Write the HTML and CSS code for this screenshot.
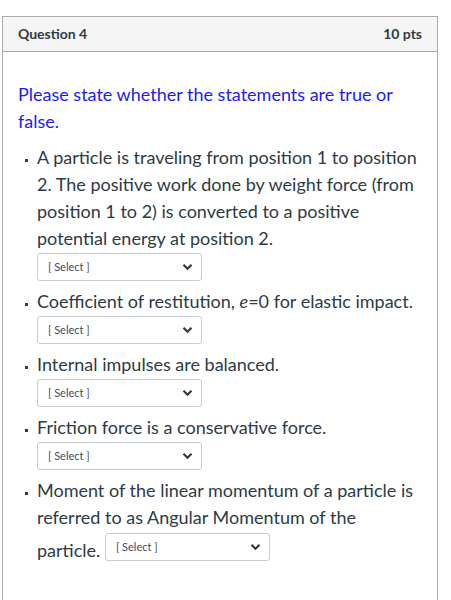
FILE: index.html
```html
<!DOCTYPE html>
<html>
<head>
<meta charset="utf-8">
<link rel="stylesheet" href="styles.css">
</head>
<body>
<div class="card">
  <div class="header">
    <span class="title">Question 4</span>
    <span class="pts">10 pts</span>
  </div>
  <div class="body">
    <p class="intro">Please state whether the statements are true or false.</p>
    <ul class="list">
      <li>
        <div>A particle is traveling from position 1 to position 2. The positive work done by weight force (from position 1 to 2) is converted to a positive potential energy at position 2.</div>
        <div class="sel"><span>[ Select ]</span><svg width="11" height="8" viewBox="0 0 11 8"><path d="M1.5 1.8 L5.5 5.8 L9.5 1.8" fill="none" stroke="#2d3b45" stroke-width="2.2"/></svg></div>
      </li>
      <li>
        <div>Coefficient of restitution, <i>e</i>=0 for elastic impact.</div>
        <div class="sel"><span>[ Select ]</span><svg width="11" height="8" viewBox="0 0 11 8"><path d="M1.5 1.8 L5.5 5.8 L9.5 1.8" fill="none" stroke="#2d3b45" stroke-width="2.2"/></svg></div>
      </li>
      <li>
        <div>Internal impulses are balanced.</div>
        <div class="sel"><span>[ Select ]</span><svg width="11" height="8" viewBox="0 0 11 8"><path d="M1.5 1.8 L5.5 5.8 L9.5 1.8" fill="none" stroke="#2d3b45" stroke-width="2.2"/></svg></div>
      </li>
      <li>
        <div>Friction force is a conservative force.</div>
        <div class="sel"><span>[ Select ]</span><svg width="11" height="8" viewBox="0 0 11 8"><path d="M1.5 1.8 L5.5 5.8 L9.5 1.8" fill="none" stroke="#2d3b45" stroke-width="2.2"/></svg></div>
      </li>
      <li>
        <div>Moment of the linear momentum of a particle is referred to as Angular Momentum of the particle. <span class="sel inline"><span>[ Select ]</span><svg width="11" height="8" viewBox="0 0 11 8"><path d="M1.5 1.8 L5.5 5.8 L9.5 1.8" fill="none" stroke="#2d3b45" stroke-width="2.2"/></svg></span></div>
      </li>
    </ul>
  </div>
</div>
</body>
</html>
```
FILE: styles.css
```css
html, body {
  margin: 0;
  padding: 0;
  background: #fff;
}
body {
  font-family: Lato, "Liberation Sans", sans-serif;
  color: #2d3b45;
}
.card {
  margin: 16px 0 0 2px;
  width: 434px;
  height: 640px;
  border: 1px solid #aaa;
}
.header {
  display: flex;
  justify-content: space-between;
  align-items: center;
  height: 34px;
  padding: 0 15px;
  background: #f5f5f5;
  border-bottom: 1px solid #aaa;
  font-weight: 700;
  font-size: 14px;
}
.title, .pts {
  position: relative;
  top: -1px;
}
.body {
  padding: 29px 15px 0 15px;
}
.intro {
  margin: 0 0 9px 0;
  color: #1c1cf0;
  font-size: 18px;
  line-height: 27px;
}
.list {
  margin: 0;
  padding: 0 0 0 19px;
  font-size: 18px;
  line-height: 27px;
}
.list li {
  margin-bottom: 7px;
  list-style: none;
  position: relative;
}
.list li::before {
  content: "";
  position: absolute;
  left: -12px;
  top: 15px;
  width: 3px;
  height: 3px;
  background: #2d3b45;
}
.sel {
  box-sizing: border-box;
  width: 165px;
  height: 28px;
  margin-top: 1px;
  border: 1px solid #c7cdd1;
  border-radius: 3px;
  display: flex;
  align-items: center;
  justify-content: space-between;
  padding: 0 8px 0 10px;
  font-size: 11px;
  line-height: 1;
  color: #3d4b6a;
  background: #fff;
}
.sel span {
  position: relative;
  top: -1px;
}
.sel.inline {
  display: inline-flex;
  vertical-align: 5px;
  margin-top: 2px;
}
```
